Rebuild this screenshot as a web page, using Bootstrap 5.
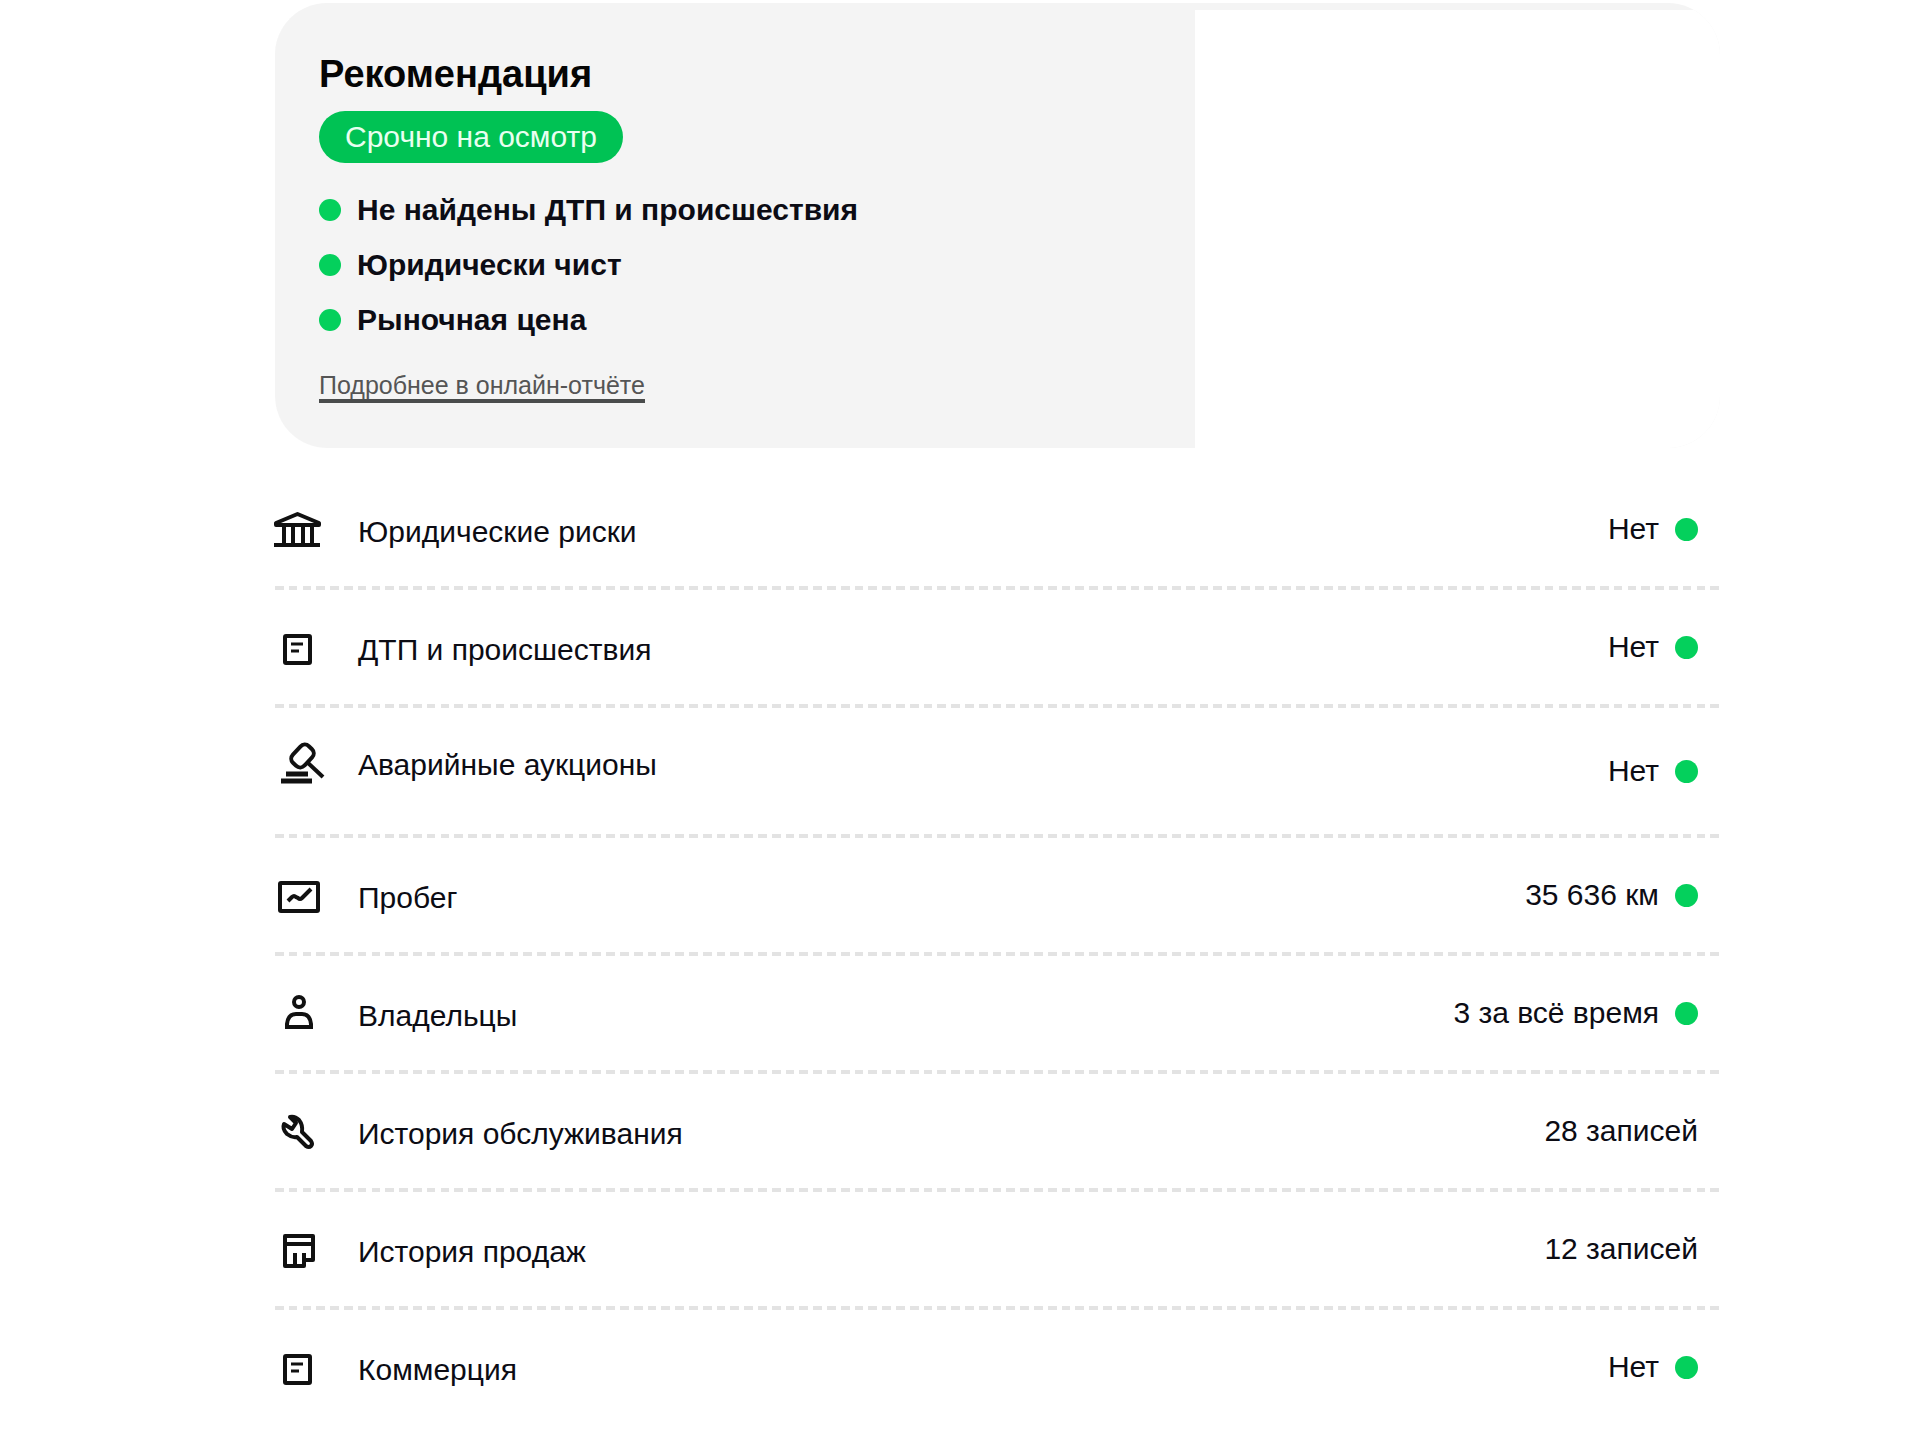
<!DOCTYPE html>
<html lang="ru">
<head>
<meta charset="utf-8">
<meta name="viewport" content="width=device-width, initial-scale=1">
<title>Отчёт об автомобиле</title>
<link href="https://cdn.jsdelivr.net/npm/bootstrap@5.3.0/dist/css/bootstrap.min.css" rel="stylesheet">
<style>
  body { font-family: "Liberation Sans", Arial, sans-serif; background: #fff; color: #0c0c14; font-size: 30px; line-height: 40px; }
  .report { width: 76%; margin-left: 275px; max-width: 1445px; padding-top: 3px; }
  .summary { background: #f4f4f4; border-radius: 52px; overflow: hidden; padding-top: 7px; }
  .summary-cover { background: #fff; }
  .summary-body { background: #f4f4f4; width: 920px; max-width: 100%; height: 438px; padding: 42px 44px 0; border-radius: 0 0 0 52px; }
  .summary-title { font-size: 38px; line-height: 44px; color: #050505; margin-bottom: 15px; }
  .verdict { background: #00c254; color: #e9fff0; font-size: 30px; line-height: 52px; padding: 0 26px; margin-bottom: 19px; }
  .dot { width: 23px; height: 23px; background: #04d05c; flex: none; }
  .facts li { font-weight: 700; line-height: 55px; gap: 16px; }
  .facts .dot { width: 22px; height: 22px; }
  .more { font-size: 25px; line-height: 28px; color: #555; border-bottom: 4px solid #4a4c4c; margin-top: 24px; }
  .checks { padding-top: 24px; }
  .check { min-height: 118px; padding-right: 22px; padding-bottom: 4px; }
  .check-line::after { content: ""; position: absolute; left: 0; right: 0; bottom: 0; height: 4px;
    background: repeating-linear-gradient(90deg, #e3e3e3 0, #e3e3e3 .6%, transparent .6%, transparent .9551%); }
  .check-tall { min-height: 130px; }
  .check-name { gap: 35px; padding-top: 5px; }
  .check-tall .check-name { padding: 0 0 12px; }
  .check-name svg { width: 48px; height: 48px; flex: none; overflow: visible; fill: none; stroke: #111; stroke-width: 4; }
  .check-value { gap: 16px; }
</style>
<script src="https://cdn.jsdelivr.net/npm/bootstrap@5.3.0/dist/js/bootstrap.bundle.min.js"></script>
</head>
<body>
<main class="report">
  <section class="summary">
    <div class="summary-cover">
      <div class="summary-body">
        <h1 class="summary-title fw-bold">Рекомендация</h1>
        <div class="d-flex"><span class="verdict rounded-pill">Срочно на осмотр</span></div>
        <ul class="facts list-unstyled mb-0">
          <li class="d-flex align-items-center"><span class="dot rounded-circle"></span>Не найдены ДТП и происшествия</li>
          <li class="d-flex align-items-center"><span class="dot rounded-circle"></span>Юридически чист</li>
          <li class="d-flex align-items-center"><span class="dot rounded-circle"></span>Рыночная цена</li>
        </ul>
        <a class="more d-inline-block text-decoration-none" href="#checks">Подробнее в онлайн-отчёте</a>
      </div>
    </div>
  </section>

  <ul class="checks list-unstyled mb-0" id="checks">
    <li class="check check-line position-relative d-flex justify-content-between align-items-center">
      <div class="check-name d-flex align-items-center">
        <svg viewBox="0 0 48 48" aria-hidden="true"><path d="M1 17v-2L22.500 6 44 15v2z" stroke-linejoin="round"/><path d="M-1 37h46M9 18v18M18 18v18M28 18v18M37 18v18"/></svg>
        <span>Юридические риски</span>
      </div>
      <div class="check-value d-flex align-items-center">Нет<span class="dot rounded-circle"></span></div>
    </li>
    <li class="check check-line position-relative d-flex justify-content-between align-items-center">
      <div class="check-name d-flex align-items-center">
        <svg viewBox="0 0 48 48" aria-hidden="true"><rect x="10" y="10" width="25" height="27" rx="1"/><path d="M16 18h12M16 25h8" stroke-width="3"/></svg>
        <span>ДТП и происшествия</span>
      </div>
      <div class="check-value d-flex align-items-center">Нет<span class="dot rounded-circle"></span></div>
    </li>
    <li class="check check-line check-tall position-relative d-flex justify-content-between align-items-center">
      <div class="check-name d-flex align-items-center">
        <svg viewBox="0 0 48 48" aria-hidden="true"><rect x="16" y="7" width="23" height="16" rx="6" transform="rotate(-47 27.500 15)"/><path d="M32 21l16 15"/><path d="M11 33h22M6 40h31" stroke-width="5"/></svg>
        <span>Аварийные аукционы</span>
      </div>
      <div class="check-value d-flex align-items-center">Нет<span class="dot rounded-circle"></span></div>
    </li>
    <li class="check check-line position-relative d-flex justify-content-between align-items-center">
      <div class="check-name d-flex align-items-center">
        <svg viewBox="0 0 48 48" aria-hidden="true"><rect x="5" y="9" width="38" height="28" rx="1"/><path d="M13 27l4-4q2-2 4 0l2 1q2 2 4 0l9-9"/></svg>
        <span>Пробег</span>
      </div>
      <div class="check-value d-flex align-items-center">35 636 км<span class="dot rounded-circle"></span></div>
    </li>
    <li class="check check-line position-relative d-flex justify-content-between align-items-center">
      <div class="check-name d-flex align-items-center">
        <svg viewBox="0 0 48 48" aria-hidden="true"><circle cx="24" cy="10" r="5"/><path d="M12 35v-3q1-10 9-10h6q8 0 9 10v3z"/></svg>
        <span>Владельцы</span>
      </div>
      <div class="check-value d-flex align-items-center">3 за всё время<span class="dot rounded-circle"></span></div>
    </li>
    <li class="check check-line position-relative d-flex justify-content-between align-items-center">
      <div class="check-name d-flex align-items-center">
        <svg viewBox="0 0 48 48" aria-hidden="true"><path d="M15 7l6 6-4 6-8-5q-2 5 3 10 5 4 10 3l9 9q3 2 5 0t0-5l-9-9q1-7-3-12-4-4-9-3z" stroke-linejoin="round"/></svg>
        <span>История обслуживания</span>
      </div>
      <div class="check-value d-flex align-items-center">28 записей</div>
    </li>
    <li class="check check-line position-relative d-flex justify-content-between align-items-center">
      <div class="check-name d-flex align-items-center">
        <svg viewBox="0 0 48 48" aria-hidden="true"><path d="M10 8h28v24h-9v6H10zM10 16h28M29 25v8M20 25v12" stroke-linejoin="round"/></svg>
        <span>История продаж</span>
      </div>
      <div class="check-value d-flex align-items-center">12 записей</div>
    </li>
    <li class="check position-relative d-flex justify-content-between align-items-center">
      <div class="check-name d-flex align-items-center">
        <svg viewBox="0 0 48 48" aria-hidden="true"><rect x="10" y="10" width="25" height="27" rx="1"/><path d="M16 18h12M16 25h8" stroke-width="3"/></svg>
        <span>Коммерция</span>
      </div>
      <div class="check-value d-flex align-items-center">Нет<span class="dot rounded-circle"></span></div>
    </li>
  </ul>
</main>
</body>
</html>
